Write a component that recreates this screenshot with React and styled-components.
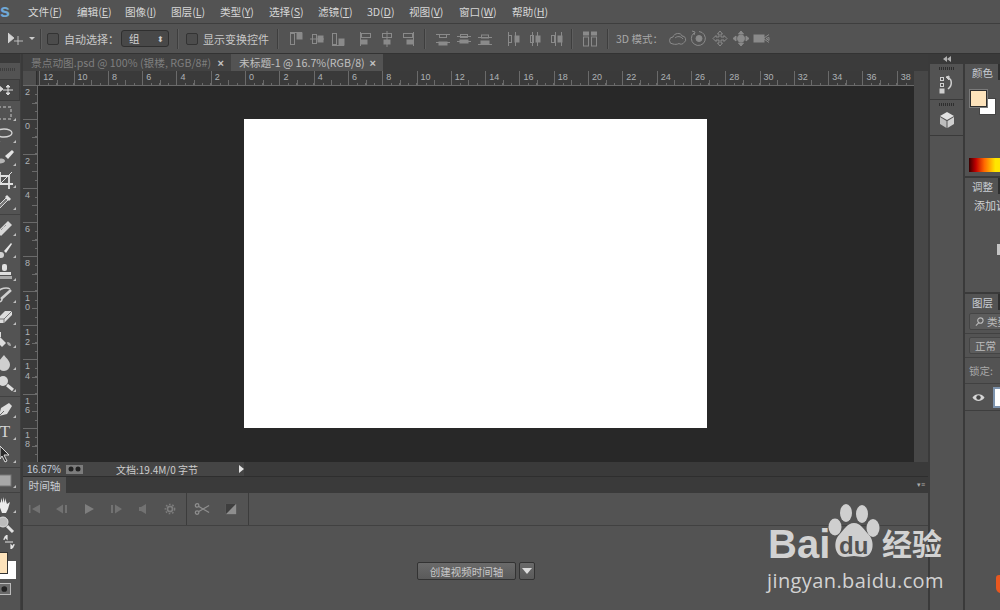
import React from "react";
import styled, { createGlobalStyle } from "styled-components";

const GlobalStyle = createGlobalStyle`
  html, body { margin: 0; padding: 0; background: #3a3a3a; }
  body { font-family: "Noto Sans CJK SC", "Liberation Sans", sans-serif; overflow: hidden; }
  * { box-sizing: border-box; }
`;

const menus = [
  ["文件", "F", 49], ["编辑", "E", 48], ["图像", "I", 46], ["图层", "L", 49], ["类型", "Y", 49], ["选择", "S", 49],
  ["滤镜", "T", 49], ["3D", "D", 42], ["视图", "V", 50], ["窗口", "W", 53], ["帮助", "H", 50],
];

const AlignSvg = ({ line, hollow, solid }) => (
  <svg width="14" height="16" viewBox="0 0 14 16" fill="none" stroke="#8a8a8a">
    {line.map((d, i) => <path key={i} d={d} />)}
    <rect x={hollow[0]} y={hollow[1]} width={hollow[2]} height={hollow[3]} />
    <rect x={solid[0]} y={solid[1]} width={solid[2]} height={solid[3]} fill="#8a8a8a" />
  </svg>
);

const alignGroups = [
  [
    { line: ["M1 1.5h12"], hollow: [1.5, 2.5, 4, 11], solid: [8, 2, 5, 6] },
    { line: ["M0 8h14"], hollow: [2.5, 3.5, 4, 9], solid: [8, 5, 5, 6] },
    { line: ["M1 14.5h12"], hollow: [1.5, 2.5, 4, 11], solid: [8, 8, 5, 6] },
  ],
  [
    { line: ["M1.5 1v14"], hollow: [2.5, 2.5, 9, 4], solid: [2, 9, 6, 4] },
    { line: ["M7 0v16"], hollow: [2.5, 2.5, 9, 4], solid: [4, 9, 6, 4] },
    { line: ["M12.5 1v14"], hollow: [2.5, 2.5, 9, 4], solid: [6, 9, 6, 4] },
  ],
  [
    { line: ["M0 3.5h14", "M0 11.5h14"], hollow: [3.5, 3.5, 7, 3], solid: [3, 11, 8, 3] },
    { line: ["M0 5.5h14", "M0 10.5h14"], hollow: [3.5, 3.5, 7, 3], solid: [3, 9, 8, 3] },
    { line: ["M0 6.5h14", "M0 13.5h14"], hollow: [3.5, 4, 7, 3], solid: [3, 10, 8, 3] },
  ],
  [
    { line: ["M1.5 1v14", "M8.5 1v14"], hollow: [1.5, 4.5, 3, 7], solid: [8, 5, 4, 6] },
    { line: ["M4.5 1v14", "M9.5 1v14"], hollow: [2.5, 4.5, 3, 7], solid: [8, 5, 4, 6] },
    { line: ["M6.5 1v14", "M12.5 1v14"], hollow: [2.5, 4.5, 3, 7], solid: [9, 5, 4, 6] },
  ],
];

const threeD = [
  <g key="a"><path d="M4 14a3.500 3.500 0 0 1 0-7c1-4 8-5 9-1a3.500 3.500 0 0 1 2 6.500c-1 2-4 2-5 1-2 1-4 1-6 .5z" /><path d="M6 8c2-2 6-2 8 1" /></g>,
  <g key="b"><path d="M4 3a7 7 0 1 0 5-1.500" /><path d="M2 1l3 1-1 3" /><circle cx="9" cy="8.500" r="3" fill="#8a8a8a" /></g>,
  <path key="c" d="M9 1l2.500 3H10v3h3V5.500L16 8.500l-3 3V10h-3v3h1.500L9 16l-2.500-3H8v-3H5v1.500l-3-3 3-3V7h3V4H6.500z" />,
  <g key="d"><path d="M9 1l2.500 3h-5zM9 16l-2.500-3h5zM1 8.500l3-2.500v5zM17 8.500l-3-2.500v5z" fill="#8a8a8a" /><circle cx="9" cy="8.500" r="3.500" fill="#8a8a8a" /></g>,
  <g key="e"><rect x="1" y="5" width="10" height="7" fill="#8a8a8a" /><path d="M11 8l5-3.500M11 9l5 3.500M13 8.500l3-1v3z" /></g>,
];

const tools = [
  { icon: <path d="M2 4l6 5-6 5zM13 5v10M8 10h10M13 5l-2 2h4zM13 15l-2-2h4z" fill="#d9d9d9" stroke="#d9d9d9" /> },
  { corner: true, icon: <rect x="3" y="4" width="13" height="12" fill="none" stroke="#c8c8c8" strokeDasharray="3 2" /> },
  { corner: true, icon: <g fill="none" stroke="#d4d4d4" strokeWidth="1.300"><ellipse cx="9" cy="8" rx="8" ry="4" /><path d="M3 11c-1 3 0 5 2 6" /></g> },
  { corner: true, icon: <g><path d="M10 9l7-6 2 2-6 7z" fill="#e4e4e4" /><path d="M4 12c3-1 6 0 6 2s-5 3-8 2c2-1 1-3 2-4z" fill="#b5b5b5" /></g> },
  { corner: true, icon: <g fill="none" stroke="#e0e0e0" strokeWidth="1.800"><path d="M5 2v12h13" /><path d="M1 6h13v13" /><path d="M2 17L17 2" strokeWidth="1" /></g> },
  { corner: true, sep: true, icon: <g><path d="M12 3l4 4-2 2-4-4z" fill="#e0e0e0" /><path d="M11 6l2 2-8 8-3 1 1-3z" fill="#777" stroke="#d8d8d8" /></g> },
  { corner: true, icon: <g><path d="M2 14L13 3l4 4L6 18z" fill="#d8d8d8" /><path d="M6 12l5-5" stroke="#777" strokeDasharray="1 1" /></g> },
  { corner: true, icon: <g><path d="M9 11l7-8 1 1-6 9z" fill="#e8e8e8" /><circle cx="6" cy="15" r="3" fill="#d0d0d0" /></g> },
  { corner: true, icon: <g fill="#e0e0e0"><rect x="7" y="2" width="5" height="7" rx="2" /><rect x="3" y="10" width="13" height="3" /><rect x="2" y="14" width="15" height="3" fill="#aaa" /></g> },
  { corner: true, icon: <g fill="none" stroke="#cfcfcf" strokeWidth="1.500"><path d="M3 7c2-4 9-5 12-3" /><path d="M6 14L16 5" strokeWidth="2.500" /><path d="M3 17c2 0 4-1 4-3" /></g> },
  { corner: true, icon: <g><path d="M2 12L10 4h7v4l-8 8H2z" fill="#dcdcdc" /><path d="M2 12h7v4M9 12l8-8" stroke="#777" fill="none" /></g> },
  { corner: true, icon: <g><path d="M4 7l7 7-4 4-6-6z" fill="#ddd" /><path d="M12 13c3 0 4 2 4 4-3 0-4-2-4-4z" fill="#aaa" /><path d="M5 8V3" stroke="#ddd" strokeWidth="2" /></g> },
  { corner: true, icon: <path d="M9 3c3 4 6 6 6 10a6 6 0 0 1-12 0c0-4 3-6 6-10z" fill="#cfcfcf" /> },
  { corner: true, sep: true, icon: <g><circle cx="8" cy="7" r="5" fill="#d8d8d8" /><path d="M12 11l6 5" stroke="#e0e0e0" strokeWidth="3" /></g> },
  { corner: true, icon: <g><path d="M4 16l2-8 8-5 3 3-5 8z" fill="#ddd" /><path d="M4 16l5-5" stroke="#666" /></g> },
  { corner: true, text: "T" },
  { corner: true, sep: true, icon: <path d="M5 2l9 9H9l3 6-2 1-3-6-2 3z" fill="#2a2a2a" stroke="#ddd" /> },
  { corner: true, sep: true, icon: <rect x="1" y="5" width="15" height="11" fill="#a8a8a8" stroke="#777" /> },
  { corner: true, icon: <path d="M4 10V5l2 3V3l2 5V2l2 6V3l2 6 3-2-2 7-2 4H7z" fill="#ececec" /> },
  { short: true, icon: <g><circle cx="8" cy="7" r="5" fill="#bcbcbc" stroke="#e0e0e0" /><path d="M12 11l6 6" stroke="#e0e0e0" strokeWidth="3" /></g> },
];

const Tools = () => (
  <ToolPanel>
    <PanelCap />
    <Grip />
    {tools.map((t, i) => (
      <React.Fragment key={i}>
        <ToolButton $active={i === 0} $corner={t.corner} $short={t.short}>
          {t.text ? <ToolGlyph>{t.text}</ToolGlyph> : <svg width="20" height="20" viewBox="0 0 20 20">{t.icon}</svg>}
        </ToolButton>
        {t.sep && <ToolSep />}
      </React.Fragment>
    ))}
    <SwapRow>
      <svg width="14" height="14" viewBox="0 0 14 14" fill="none" stroke="#e4e4e4" strokeWidth="1.200">
        <path d="M2 5c0-2 1-3 3-3M5 0v4L3 2zM12 9c0 2-1 3-3 3M9 10v4l2-2zM3 7l8 0" />
      </svg>
    </SwapRow>
    <ColorChips>
      <BackChip />
      <FrontChip />
    </ColorChips>
    <MaskButton>
      <svg width="14" height="12" viewBox="0 0 14 12"><circle cx="6" cy="6" r="4" fill="#222" /></svg>
    </MaskButton>
  </ToolPanel>
);

const hLabels = [12, 10, 8, 6, 4, 2, 0, 2, 4, 6, 8, 10, 12, 14, 16, 18, 20, 22, 24, 26, 28, 30, 32, 34, 36, 38];
const vLabels = [2, 0, 2, 4, 6, 8, 10, 12, 14, 16, 18];

const Timeline = () => (
  <TimelinePanel>
    <TimelineTabs>
      <TimelineTab>时间轴</TimelineTab>
      <PanelMenu>▾≡</PanelMenu>
    </TimelineTabs>
    <Transport>
      <TransportButton><svg width="14" height="12" viewBox="0 0 14 12" fill="#727272"><path d="M1 2h1.500v8H1zM12 1.500v9L4 6z" /></svg></TransportButton>
      <TransportButton><svg width="14" height="12" viewBox="0 0 14 12" fill="#727272"><path d="M8 1.500v9L1 6zM10 2h2v8h-2z" /></svg></TransportButton>
      <TransportButton><svg width="14" height="12" viewBox="0 0 14 12" fill="#7e7e7e"><path d="M3 1l9 5-9 5z" /></svg></TransportButton>
      <TransportButton><svg width="14" height="12" viewBox="0 0 14 12" fill="#727272"><path d="M2 2h2v8H2zM6 1.500v9l7-4.500z" /></svg></TransportButton>
      <TransportButton><svg width="14" height="12" viewBox="0 0 14 12" fill="#727272"><path d="M10 1v10L5 8H3V4h2z" /></svg></TransportButton>
      <TransportButton><svg width="12" height="12" viewBox="0 0 14 14"><circle cx="7" cy="7" r="3" fill="none" stroke="#7e7e7e" strokeWidth="2" /><circle cx="7" cy="7" r="5.500" fill="none" stroke="#7e7e7e" strokeDasharray="2 2" strokeWidth="1.500" /></svg></TransportButton>
      <TransportDivider $l={1} />
      <EditButton><svg width="16" height="14" viewBox="0 0 18 14" fill="none" stroke="#8e8e8e" strokeWidth="1.400"><circle cx="3.500" cy="3" r="2" /><circle cx="3.500" cy="11" r="2" /><path d="M5 4l12 7M5 10l12-7" /></svg></EditButton>
      <EditButton><svg width="12" height="12" viewBox="0 0 14 14"><rect x="1" y="1" width="12" height="12" fill="#8e8e8e" /><path d="M1 13L13 1H1z" fill="#3e3e3e" /></svg></EditButton>
      <TransportDivider $l={3} />
    </Transport>
    <TimelineBody>
      <CreateButton>创建视频时间轴</CreateButton>
      <ArrowButton><svg width="10" height="6" viewBox="0 0 10 6" fill="#ddd"><path d="M0 0h10L5 6z" /></svg></ArrowButton>
    </TimelineBody>
  </TimelinePanel>
);

const Dock = () => (
  <DockColumn>
    <DockCap>
      <svg width="8" height="6" viewBox="0 0 8 6" fill="#b0b0b0"><path d="M4 0v6L0 3zM8 0v6L4 3z" /></svg>
    </DockCap>
    <DockSection>
      <DockGrip />
      <svg width="20" height="20" viewBox="0 0 20 20" fill="none" stroke="#cfcfcf">
        <rect x="3.500" y="2.500" width="3" height="3" /><rect x="3.500" y="8.500" width="3" height="3" />
        <rect x="3" y="14" width="4" height="4" fill="#cfcfcf" /><path d="M10 3c5 0 6 7 1 11" strokeWidth="1.500" /><path d="M9 2l3-1v4z" fill="#cfcfcf" />
      </svg>
    </DockSection>
    <DockSection>
      <DockGrip />
      <svg width="18" height="18" viewBox="0 0 18 18">
        <path d="M9 1l7 4-7 4-7-4z" fill="#e2e2e2" /><path d="M2 6l6.500 4v7L2 13z" fill="#bdbdbd" /><path d="M16 6l-6.500 4v7L16 13z" fill="#cfcfcf" />
      </svg>
    </DockSection>
  </DockColumn>
);

const RightPanels = () => (
  <PanelColumn>
    <PanelGroup $h={112}>
      <TabStrip><PanelTab>颜色</PanelTab></TabStrip>
      <ColorBody>
        <SwatchStack><BgSwatch /><FgSwatch /></SwatchStack>
        <Spectrum />
      </ColorBody>
    </PanelGroup>
    <PanelGroup $h={114}>
      <TabStrip><PanelTab>调整</PanelTab></TabStrip>
      <AdjustText>添加调整</AdjustText>
      <MiniIcon />
    </PanelGroup>
    <PanelGroup $grow>
      <TabStrip><PanelTab>图层</PanelTab></TabStrip>
      <LayerRow $h={24}>
        <LayerField>
          <svg width="9" height="9" viewBox="0 0 10 10" fill="none" stroke="#bbb" strokeWidth="1.200"><circle cx="6" cy="4" r="3" /><path d="M4 6.500L1 9.500" /></svg>
          类型
        </LayerField>
      </LayerRow>
      <LayerRow $h={24}><LayerField>正常</LayerField></LayerRow>
      <LayerRow $h={26}><LockLabel>锁定:</LockLabel></LayerRow>
      <LayerItem>
        <svg width="13" height="9" viewBox="0 0 13 9"><path d="M0.500 4.500C3 0 10 0 12.500 4.500 10 9 3 9 0.500 4.500z" fill="#d5d5d5" /><circle cx="6.500" cy="4.500" r="2.200" fill="#444" /></svg>
        <LayerThumb />
      </LayerItem>
      <OrangeMark />
    </PanelGroup>
  </PanelColumn>
);

export default function App() {
  return (
    <Page>
      <GlobalStyle />
      <MenuBar>
        <Logo>Ps</Logo>
        {menus.map(([name, key, w]) => (
          <MenuItem key={key} $w={w}>{name}(<u>{key}</u>)</MenuItem>
        ))}
      </MenuBar>
      <OptionsBar>
        <MoveIcon>
          <svg width="16" height="14" viewBox="0 0 16 14" fill="#d4d4d4"><path d="M0 1l6 5-6 5zM10 4v9M6 9h9" stroke="#d4d4d4" strokeWidth="0.800" /></svg>
          <Caret />
        </MoveIcon>
        <BarDivider $l={5} $r={6} />
        <CheckBox />
        <OptionLabel $w={57}>自动选择：</OptionLabel>
        <SelectBox>组<Updown>⬍</Updown></SelectBox>
        <BarDivider $l={8} $r={8} />
        <CheckBox />
        <OptionLabel $w={74}>显示变换控件</OptionLabel>
        <BarDivider $l={0} $r={11} />
        <AlignGroup $r={14}>{alignGroups[0].map((a, i) => <AlignSvg key={i} {...a} />)}</AlignGroup>
        <AlignGroup>{alignGroups[1].map((a, i) => <AlignSvg key={i} {...a} />)}</AlignGroup>
        <BarDivider $l={9} $r={11} />
        <AlignGroup $r={15}>{alignGroups[2].map((a, i) => <AlignSvg key={i} {...a} />)}</AlignGroup>
        <AlignGroup>{alignGroups[3].map((a, i) => <AlignSvg key={i} {...a} />)}</AlignGroup>
        <BarDivider $l={8} $r={11} />
        <svg width="14" height="16" viewBox="0 0 14 16" fill="none" stroke="#8a8a8a"><rect x="0.500" y="1" width="5" height="3" fill="#8a8a8a" /><rect x="8.500" y="1" width="5" height="3" fill="#8a8a8a" /><rect x="0.500" y="6" width="5" height="9" /><rect x="8.500" y="6" width="5" height="9" /></svg>
        <BarDivider $l={10} $r={8} />
        <ModeLabel>3D 模式：</ModeLabel>
        <ThreeDGroup>
          {threeD.map((icon, i) => (
            <svg key={i} width="18" height="17" viewBox="0 0 18 17" fill="none" stroke="#8a8a8a">{icon}</svg>
          ))}
        </ThreeDGroup>
      </OptionsBar>
      <Workspace>
        <Tools />
        <Center>
          <DocTabs>
            <DocTab>景点动图.psd @ 100% (银楼, RGB/8#)<TabClose>×</TabClose></DocTab>
            <DocTab $active>未标题-1 @ 16.7%(RGB/8)<TabClose>×</TabClose></DocTab>
          </DocTabs>
          <RulerRow>
            <RulerCorner />
            <HRuler>
              {hLabels.map((n, i) => <HCell key={i}>{n}</HCell>)}
            </HRuler>
            <ScrollTop />
          </RulerRow>
          <CanvasRow>
            <VRuler>
              {vLabels.map((n, i) => <VCell key={i}>{n}</VCell>)}
            </VRuler>
            <Canvas><Document /></Canvas>
            <ScrollTrack />
          </CanvasRow>
          <StatusBar>
            <StatusInfo>
              <Zoom>16.67%</Zoom>
              <StatusIcon>
                <svg width="16" height="8" viewBox="0 0 16 8"><circle cx="4" cy="4" r="2.500" fill="#222" /><circle cx="11" cy="4" r="2.500" fill="#222" /></svg>
              </StatusIcon>
              <DocSize>文档:19.4M/0 字节</DocSize>
              <StatusArrow />
            </StatusInfo>
          </StatusBar>
          <Timeline />
        </Center>
        <Dock />
        <RightPanels />
      </Workspace>
      <Watermark>
        <LogoLine>
          <BaiText>Bai</BaiText>
          <PawLogo>
            <svg width="52" height="55" viewBox="0 0 52 55" fill="#cfcfcf">
              <ellipse cx="18" cy="10" rx="6" ry="9" />
              <ellipse cx="34" cy="11" rx="6" ry="9" />
              <ellipse cx="7" cy="24" rx="6.500" ry="8.500" />
              <ellipse cx="45" cy="25" rx="6.500" ry="9" />
              <path d="M26 20c7 0 10 7 15 12 6 6 5 22-6 22-4 0-6-1-9-1s-6 1-9 1C6 54 5 38 11 32c5-5 8-12 15-12z" />
            </svg>
            <DuText>du</DuText>
          </PawLogo>
          <JingText>经验</JingText>
        </LogoLine>
        <DomainText>jingyan.baidu.com</DomainText>
      </Watermark>
    </Page>
  );
}

const Page = styled.div`
  position: relative;
  width: 1000px;
  height: 610px;
  display: flex;
  flex-direction: column;
  overflow: hidden;
  background: #3a3a3a;
`;

const MenuBar = styled.div`
  height: 24px;
  display: flex;
  align-items: center;
  background: #535353;
  border-bottom: 1px solid #3e3e3e;
  color: #d6d6d6;
  font-size: 10.700px;
`;

const Logo = styled.div`
  width: 28px;
  margin-left: -12px;
  margin-right: 12px;
  color: #6fa8d6;
  font: bold 18px "Liberation Sans", sans-serif;
`;

const MenuItem = styled.div`
  width: ${(p) => p.$w}px;
  flex: none;
  white-space: nowrap;
  letter-spacing: -0.1px;
`;

const OptionsBar = styled.div`
  height: 30px;
  display: flex;
  align-items: center;
  padding-left: 8px;
  background: #535353;
  border-bottom: 1px solid #333;
`;

const MoveIcon = styled.div`
  display: flex;
  align-items: center;
  gap: 5px;
  flex: none;
`;

const Caret = styled.div`
  width: 0;
  height: 0;
  border: 3px solid transparent;
  border-top: 3px solid #ccc;
  margin-top: 3px;
`;

const BarDivider = styled.div`
  width: 1px;
  height: 20px;
  margin: 0 ${(p) => p.$r}px 0 ${(p) => p.$l}px;
  background: #3e3e3e;
  box-shadow: 1px 0 0 #5e5e5e;
  flex: none;
`;

const CheckBox = styled.div`
  width: 12px;
  height: 12px;
  border-radius: 2px;
  background: #4c4c4c;
  border: 1px solid #333;
  flex: none;
`;

const OptionLabel = styled.div`
  width: ${(p) => p.$w}px;
  margin-left: 5px;
  color: #c8c8c8;
  font-size: 11px;
  white-space: nowrap;
  flex: none;
`;

const SelectBox = styled.div`
  width: 48px;
  height: 17px;
  display: flex;
  align-items: center;
  justify-content: space-between;
  padding: 0 4px 0 7px;
  background: #484848;
  border: 1px solid #2f2f2f;
  border-radius: 3px;
  color: #d2d2d2;
  font-size: 10.500px;
  flex: none;
`;

const Updown = styled.span`
  font-size: 8px;
  color: #ccc;
`;

const AlignGroup = styled.div`
  display: flex;
  align-items: center;
  gap: 7px;
  margin-right: ${(p) => p.$r || 0}px;
  flex: none;
`;

const ModeLabel = styled.div`
  color: #a8a8a8;
  font-size: 10.500px;
  width: 53px;
  white-space: nowrap;
  flex: none;
`;

const ThreeDGroup = styled.div`
  display: flex;
  gap: 3px;
  flex: none;
`;

const Workspace = styled.div`
  flex: 1;
  min-height: 0;
  display: flex;
`;

const ToolPanel = styled.div`
  width: 21px;
  margin-right: 2px;
  flex: none;
  display: flex;
  flex-direction: column;
  background: #535353;
  border-right: 1px solid #404040;
  overflow: hidden;
`;

const PanelCap = styled.div`
  height: 9px;
  flex: none;
  background: #3a3a3a;
`;

const Grip = styled.div`
  height: 16px;
  flex: none;
  margin: 0 4px 0 0;
  background: repeating-linear-gradient(90deg, #3e3e3e 0 1px, transparent 1px 2px) 0 5px / 100% 3px no-repeat;
`;

const ToolButton = styled.div`
  position: relative;
  height: ${(p) => (p.$short ? 18 : 22.4)}px;
  flex: none;
  display: flex;
  align-items: center;
  margin-left: -5px;
  background: ${(p) => (p.$active ? "#484848" : "transparent")};
  box-shadow: ${(p) => (p.$active ? "inset 0 0 0 1px #3c3c3c" : "none")};
  &::after {
    content: "";
    display: ${(p) => (p.$corner ? "block" : "none")};
    position: absolute;
    right: 4px;
    bottom: 3px;
    border-style: solid;
    border-width: 0 0 3px 3px;
    border-color: transparent transparent #bdbdbd transparent;
  }
`;

const ToolGlyph = styled.div`
  width: 20px;
  text-align: center;
  color: #d4d4d4;
  font: 17px "Liberation Serif", serif;
`;

const ToolSep = styled.div`
  height: 1px;
  margin: 1px 0;
  flex: none;
  background: #414141;
`;

const SwapRow = styled.div`
  height: 16px;
  flex: none;
  display: flex;
  align-items: center;
  padding-left: 2px;
`;

const ColorChips = styled.div`
  position: relative;
  height: 31px;
  margin-top: 2px;
  flex: none;
`;

const FrontChip = styled.div`
  position: absolute;
  left: -4px;
  top: 0;
  width: 12px;
  height: 22px;
  background: #fde3bb;
  border: 1px solid #333;
`;

const BackChip = styled.div`
  position: absolute;
  left: 0;
  top: 9px;
  width: 16px;
  height: 18px;
  background: #fff;
`;

const MaskButton = styled.div`
  width: 11px;
  height: 12px;
  display: flex;
  align-items: center;
  justify-content: flex-end;
  overflow: hidden;
  background: #6a6a6a;
  border: 1px solid #bbb;
  border-left: 0;
  flex: none;
`;

const Center = styled.div`
  width: 905px;
  flex: none;
  display: flex;
  flex-direction: column;
`;

const DocTabs = styled.div`
  height: 17px;
  display: flex;
  background: #3b3b3b;
  flex: none;
`;

const DocTab = styled.div`
  width: ${(p) => (p.$active ? 152 : 208)}px;
  padding: 0 7px 0 8px;
  display: flex;
  align-items: center;
  justify-content: space-between;
  background: ${(p) => (p.$active ? "#535353" : "#424242")};
  color: ${(p) => (p.$active ? "#c0c0c0" : "#7f7f7f")};
  font-size: 10.700px;
  white-space: nowrap;
  flex: none;
`;

const TabClose = styled.span`
  color: #c4c4c4;
  font: bold 11px "Liberation Sans", sans-serif;
`;

const RulerRow = styled.div`
  height: 15px;
  display: flex;
  flex: none;
`;

const RulerCorner = styled.div`
  width: 14px;
  background: #4e4e4e;
  border-right: 1px solid #2e2e2e;
  flex: none;
`;

const HRuler = styled.div`
  width: 877px;
  display: flex;
  flex: none;
  padding-left: 2.300px;
  background: #3a3a3a;
  border-bottom: 1px solid #6a6a6a;
  overflow: hidden;
`;

const HCell = styled.div`
  width: 34.310px;
  flex: none;
  padding-left: 3px;
  color: #aeb2b6;
  font: 9px/12px "Liberation Sans", sans-serif;
  border-left: 1px solid #6a6a6a;
  background:
    linear-gradient(#6a6a6a, #6a6a6a) 16.600px 100% / 1px 5px no-repeat,
    repeating-linear-gradient(90deg, transparent 0 7.600px, #6a6a6a 7.600px 8.575px) 0 100% / 100% 2px no-repeat;
`;

const ScrollTop = styled.div`
  flex: 1;
  background: #474747;
`;

const CanvasRow = styled.div`
  height: 376px;
  display: flex;
  flex: none;
`;

const VRuler = styled.div`
  width: 15px;
  flex: none;
  margin-top: -1px;
  background: #3a3a3a;
  border-right: 1px solid #6a6a6a;
  overflow: hidden;
`;

const VCell = styled.div`
  height: 34.310px;
  width: 14px;
  padding: 2px 6px 0 2px;
  color: #aeb2b6;
  font: 9px/9.500px "Liberation Sans", sans-serif;
  word-break: break-all;
  border-top: 1px solid #6a6a6a;
  background:
    linear-gradient(#6a6a6a, #6a6a6a) 100% 16.600px / 5px 1px no-repeat,
    repeating-linear-gradient(180deg, transparent 0 7.600px, #6a6a6a 7.600px 8.575px) 100% 0 / 2px 100% no-repeat;
`;

const Canvas = styled.div`
  flex: 1;
  display: flex;
  align-items: center;
  justify-content: center;
  padding: 0 2px 2px 0;
  background: #282828;
`;

const Document = styled.div`
  width: 463px;
  height: 309px;
  flex: none;
  background: #fff;
`;

const ScrollTrack = styled.div`
  width: 14px;
  flex: none;
  background: #474747;
`;

const StatusBar = styled.div`
  height: 15px;
  flex: none;
  background: #3a3a3a;
  border-bottom: 1px solid #2e2e2e;
`;

const StatusInfo = styled.div`
  width: 221px;
  height: 100%;
  display: flex;
  align-items: center;
  padding-left: 4px;
  background: #454545;
  color: #cdcdcd;
  font-size: 9.500px;
`;

const Zoom = styled.div`
  width: 39px;
  color: #c4cedb;
  font: 10px "Liberation Sans", sans-serif;
  flex: none;
`;

const StatusIcon = styled.div`
  width: 17px;
  height: 9px;
  display: flex;
  align-items: center;
  justify-content: center;
  background: #7c7c7c;
  flex: none;
`;

const DocSize = styled.div`
  width: 123px;
  margin-left: 33px;
  font-size: 10px;
  flex: none;
`;

const StatusArrow = styled.div`
  width: 0;
  height: 0;
  border-left: 5px solid #e4e4e4;
  border-top: 4px solid transparent;
  border-bottom: 4px solid transparent;
`;

const TimelinePanel = styled.div`
  flex: 1;
  display: flex;
  flex-direction: column;
  min-height: 0;
  background: #535353;
`;

const TimelineTabs = styled.div`
  height: 16px;
  display: flex;
  align-items: stretch;
  justify-content: space-between;
  background: #3a3a3a;
  flex: none;
`;

const TimelineTab = styled.div`
  width: 43px;
  display: flex;
  align-items: center;
  justify-content: center;
  background: #535353;
  color: #c8ccd2;
  font-size: 10.700px;
`;

const PanelMenu = styled.div`
  padding-right: 3px;
  color: #aaa;
  font: 7px/15px "Liberation Sans", sans-serif;
`;

const Transport = styled.div`
  height: 33px;
  display: flex;
  align-items: stretch;
  border-bottom: 1px solid #414141;
  flex: none;
`;

const TransportButton = styled.div`
  width: 24px;
  margin-right: 3px;
  display: flex;
  align-items: center;
  justify-content: center;
  flex: none;
`;

const TransportDivider = styled.div`
  width: 1px;
  margin-left: ${(p) => p.$l}px;
  flex: none;
  background: #3c3c3c;
`;

const EditButton = styled.div`
  width: 29px;
  display: flex;
  align-items: center;
  justify-content: center;
  flex: none;
`;

const TimelineBody = styled.div`
  flex: 1;
  display: flex;
  gap: 3px;
  padding: 36px 0 0 394px;
`;

const CreateButton = styled.div`
  width: 99px;
  height: 18px;
  display: flex;
  align-items: center;
  justify-content: center;
  background: linear-gradient(#6a6a6a, #5a5a5a);
  border: 1px solid #333;
  border-radius: 2px;
  color: #c8c8c8;
  font-size: 10.500px;
`;

const ArrowButton = styled(CreateButton)`
  width: 16px;
`;

const DockColumn = styled.div`
  width: 35px;
  margin-left: 2px;
  flex: none;
  display: flex;
  flex-direction: column;
  background: #535353;
  border-right: 2px solid #3a3a3a;
`;

const DockCap = styled.div`
  height: 10px;
  display: flex;
  align-items: center;
  justify-content: center;
  background: #3a3a3a;
  flex: none;
`;

const DockSection = styled.div`
  height: 36px;
  display: flex;
  flex-direction: column;
  align-items: center;
  gap: 5px;
  padding-top: 3px;
  border-bottom: 1px solid #3a3a3a;
  flex: none;
`;

const DockGrip = styled.div`
  width: 16px;
  height: 3px;
  flex: none;
  background: repeating-linear-gradient(90deg, #2e2e2e 0 1px, transparent 1px 2px);
`;

const PanelColumn = styled.div`
  flex: 1;
  min-width: 0;
  display: flex;
  flex-direction: column;
  padding-top: 10px;
  background: #3a3a3a;
  gap: 2px;
`;

const PanelGroup = styled.div`
  position: relative;
  ${(p) => (p.$grow ? "flex: 1;" : `height: ${p.$h}px; flex: none;`)}
  display: flex;
  flex-direction: column;
  background: #535353;
  overflow: hidden;
`;

const TabStrip = styled.div`
  height: 16px;
  display: flex;
  background: #2f2f2f;
  flex: none;
`;

const PanelTab = styled.div`
  width: 33px;
  padding-left: 7px;
  display: flex;
  align-items: center;
  background: #535353;
  color: #c8ccd2;
  font-size: 10.500px;
  flex: none;
`;

const ColorBody = styled.div`
  flex: 1;
  display: flex;
  flex-direction: column;
  padding: 10px 0 0 4px;
`;

const SwatchStack = styled.div`
  position: relative;
  height: 25px;
  flex: none;
`;

const FgSwatch = styled.div`
  position: absolute;
  left: 1px;
  top: 0;
  width: 17px;
  height: 17px;
  background: #fde3bb;
  border: 1px solid #2e2e2e;
  outline: 1px solid #7a7a7a;
`;

const BgSwatch = styled.div`
  position: absolute;
  left: 10px;
  top: 8px;
  width: 17px;
  height: 17px;
  background: #fff;
  border: 1px solid #444;
`;

const Spectrum = styled.div`
  height: 14px;
  margin-top: 43px;
  background: linear-gradient(90deg, #3a0000, #c00000 22%, #ff6a00 50%, #ffe600 85%);
  flex: none;
`;

const AdjustText = styled.div`
  margin: 3px 0 0 9px;
  color: #d0d0d0;
  font-size: 11px;
  white-space: nowrap;
`;

const MiniIcon = styled.div`
  width: 4px;
  height: 11px;
  margin: 31px 0 0 32px;
  background: #c4c4c4;
  flex: none;
`;

const LayerRow = styled.div`
  height: ${(p) => p.$h}px;
  display: flex;
  align-items: center;
  padding-left: 4px;
  border-bottom: 1px solid #414141;
  flex: none;
`;

const LayerField = styled.div`
  width: 50px;
  height: 17px;
  display: flex;
  align-items: center;
  gap: 3px;
  padding-left: 5px;
  background: #5c5c5c;
  border: 1px solid #454545;
  border-radius: 2px;
  color: #bdbdbd;
  font-size: 10.500px;
  white-space: nowrap;
  flex: none;
  svg { flex: none; }
`;

const LockLabel = styled.div`
  color: #a8a8a8;
  font-size: 10.500px;
  white-space: nowrap;
`;

const LayerItem = styled.div`
  height: 27px;
  display: flex;
  align-items: center;
  padding-left: 7px;
  gap: 8px;
  border-bottom: 1px solid #3e3e3e;
  flex: none;
  svg { flex: none; }
`;

const LayerThumb = styled.div`
  width: 20px;
  height: 21px;
  background: #fff;
  border: 2px solid #7d93ad;
  flex: none;
`;

const OrangeMark = styled.div`
  position: absolute;
  right: -6px;
  bottom: 17px;
  width: 10px;
  height: 18px;
  background: #e8571f;
  border-radius: 3px 3px 5px 5px;
`;

const Watermark = styled.div`
  position: absolute;
  left: 768px;
  top: 503px;
  width: 180px;
  color: #d2d2d2;
`;

const LogoLine = styled.div`
  display: flex;
  align-items: flex-start;
`;

const BaiText = styled.div`
  width: 60px;
  margin-top: 21px;
  font: bold 40px/40px "Liberation Sans", sans-serif;
`;

const PawLogo = styled.div`
  position: relative;
  width: 52px;
  height: 55px;
  flex: none;
`;

const DuText = styled.div`
  position: absolute;
  left: 11px;
  top: 31px;
  color: #535353;
  font: bold 24px/24px "Liberation Sans", sans-serif;
`;

const JingText = styled.div`
  margin: 22px 0 0 2px;
  font: bold 30px/34px "Noto Sans CJK SC", sans-serif;
  white-space: nowrap;
`;

const DomainText = styled.div`
  margin-top: 6px;
  margin-left: -1px;
  font: 20px/22px "Open Sans", sans-serif;
  letter-spacing: 0.4px;
  white-space: nowrap;
`;
